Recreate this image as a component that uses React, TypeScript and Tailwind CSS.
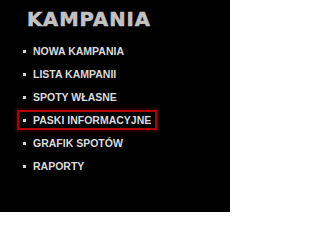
const items = [
  { label: 'NOWA KAMPANIA' },
  { label: 'LISTA KAMPANII' },
  { label: 'SPOTY WŁASNE' },
  { label: 'PASKI INFORMACYJNE', active: true },
  { label: 'GRAFIK SPOTÓW' },
  { label: 'RAPORTY' },
];

export default function App() {
  return (
    <div className="w-[230px] h-[212px] bg-black overflow-hidden font-['Liberation_Sans',Arial,sans-serif]">
      <h1 className="pl-[27px] pt-[10px] font-['DejaVu_Sans',sans-serif] text-[19.5px] leading-[20px] font-bold tracking-[1px] text-[#c2c2c2] [-webkit-text-stroke:0.6px_#c2c2c2]">
        KAMPANIA
      </h1>
      <ul className="mt-[11px] ml-[17px] flex flex-col gap-[3px]">
        {items.map((item) => (
          <li
            key={item.label}
            className={`flex items-center w-[140px] h-[20px] pl-[4px] border-2 ${
              item.active
                ? 'border-[#b40000] shadow-[0_0_3px_1px_rgba(120,0,0,0.6)]'
                : 'border-transparent'
            }`}
          >
            <span className="w-[3px] h-[3px] bg-[#d6d6d6]" />
            <span className="ml-[7px] text-[10.5px] leading-none font-bold text-[#dcdcdc] whitespace-nowrap">
              {item.label}
            </span>
          </li>
        ))}
      </ul>
    </div>
  );
}
